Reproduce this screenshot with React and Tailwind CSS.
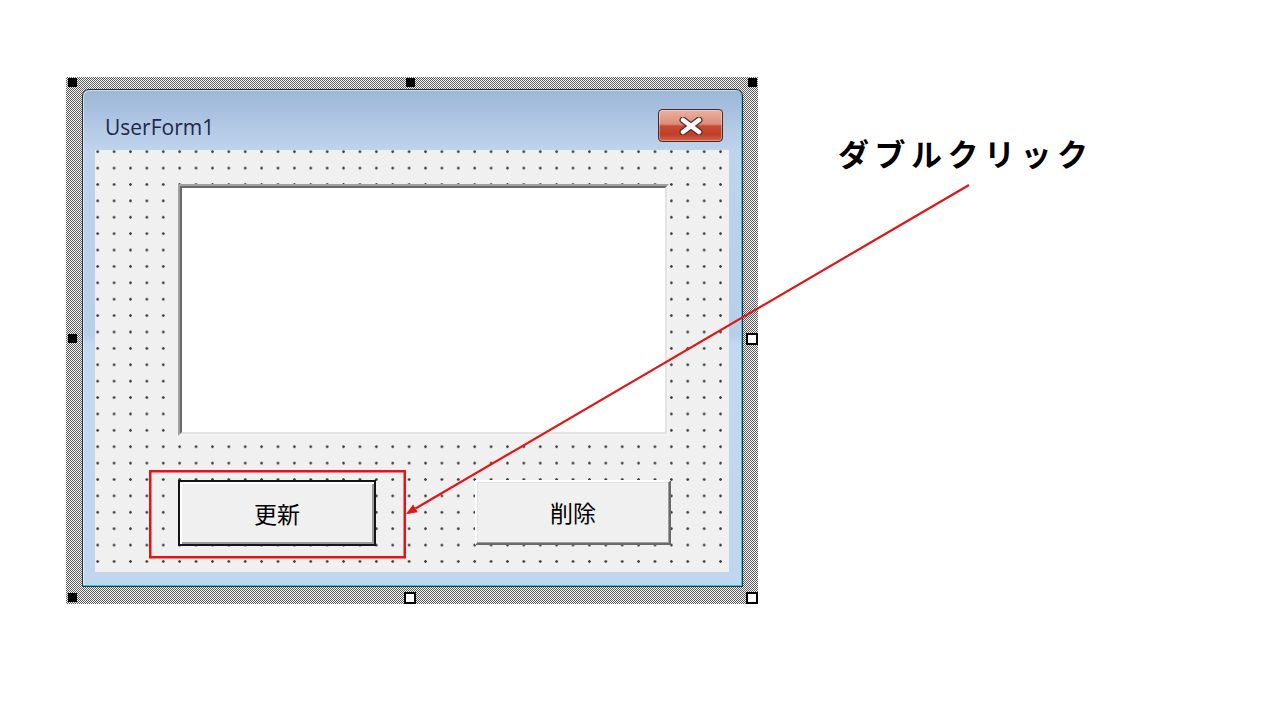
import React from 'react';

// handles around the selected form (black = fixed, white = sizing)
const handles = [
    { cls: 'left-[2px] top-[1px] w-[9px] h-[9px] bg-black' },
    { cls: 'left-[340px] top-[1px] w-[9px] h-[9px] bg-black' },
    { cls: 'left-[682px] top-[1px] w-[9px] h-[9px] bg-black' },
    { cls: 'left-[2px] top-[257px] w-[9px] h-[9px] bg-black' },
    { cls: 'left-[680px] top-[256px] w-[12px] h-[12px] bg-white border-2 border-black' },
    { cls: 'left-[2px] top-[516px] w-[9px] h-[9px] bg-black' },
    { cls: 'left-[338px] top-[515px] w-[12px] h-[12px] bg-white border-2 border-black' },
    { cls: 'left-[680px] top-[515px] w-[12px] h-[12px] bg-white border-2 border-black' },
];

const CloseIcon = () => (
    <svg width="26" height="18" viewBox="0 0 26 18">
        <path d="M5 3 L21 15 M21 3 L5 15" stroke="#5a2a24" strokeWidth="7" strokeLinecap="round" />
        <path d="M5 3 L21 15 M21 3 L5 15" stroke="#ffffff" strokeWidth="4.5" strokeLinecap="round" />
    </svg>
);

const App = () => {
    return (
        <div className="relative w-[1280px] h-[720px] bg-white overflow-hidden flex items-start">
            {/* selection frame */}
            <div className="relative ml-[66px] mt-[77px] w-[692px] h-[527px] pl-[16px] pt-[12px] bg-[repeating-conic-gradient(#5a5a5a_0_25%,#ffffff_0_50%)] bg-[length:2px_2px]">
                {handles.map((h, i) => (
                    <div key={i} className={`absolute ${h.cls}`} />
                ))}

                {/* UserForm window */}
                <div className="w-[661px] h-[498px] flex flex-col rounded-t-[7px] border border-[#26303e] bg-[linear-gradient(to_bottom,#9cb6d7_0px,#b4cbe6_40px,#bed3ec_60px,#b8cfea_245px,#c4d8ef_255px,#c0d6ee_100%)] shadow-[inset_-1px_-1px_0_#3cc6ea,inset_1px_1px_0_rgba(255,255,255,0.5)]">
                    <div className="h-[60px] flex items-start justify-between">
                        <span className="ml-[22px] mt-[23px] text-[21px] leading-[28px] text-[#23264a] font-['Open_Sans','Noto_Sans',sans-serif]">
                            UserForm1
                        </span>
                        <div className="mt-[19px] mr-[19px] w-[65px] h-[33px] rounded-[4px] border border-[#4e2822] flex items-center justify-center bg-[linear-gradient(to_bottom,#e9b1a3_0%,#dd8d7a_45%,#c84a33_52%,#c13f29_80%,#d2654c_100%)] shadow-[inset_0_0_0_1px_rgba(255,255,255,0.35)]">
                            <CloseIcon />
                        </div>
                    </div>

                    <div className="flex pl-[12px]">
                        {/* client area with design grid */}
                        <div className="w-[634px] h-[422px] flex flex-col pl-[83px] pt-[34px] bg-[#f0f0f0] bg-[radial-gradient(circle,#404040_1.1px,transparent_1.5px)] bg-[length:16.4px_16.4px] bg-[position:-5.5px_-6.5px]">
                            {/* TextBox */}
                            <div className="w-[491px] h-[252px] border-2 border-t-[#a0a0a0] border-l-[#a0a0a0] border-r-[#f4f4f4] border-b-[#f4f4f4]">
                                <div className="w-full h-full bg-white border-2 border-t-[#6a6a6a] border-l-[#6a6a6a] border-r-[#e3e3e3] border-b-[#e3e3e3]" />
                            </div>

                            {/* CommandButtons */}
                            <div className="flex mt-[44px]">
                                <div className="w-[198px] h-[66px] border-2 border-[#151515] bg-[#f0f0f0] shadow-[inset_2px_2px_0_#ffffff,inset_-2px_-2px_0_#9a9a9a] flex items-center justify-center">
                                    <span className="text-[23px] text-black font-['Noto_Sans_CJK_JP',sans-serif]">更新</span>
                                </div>
                                <div className="ml-[99px] w-[196px] h-[65px] border-2 border-t-[#ffffff] border-l-[#ffffff] border-r-[#696969] border-b-[#696969] bg-[#f0f0f0] shadow-[inset_-1px_-1px_0_#a0a0a0,inset_1px_1px_0_#e3e3e3] flex items-center justify-center">
                                    <span className="text-[23px] text-black font-['Noto_Sans_CJK_JP',sans-serif]">削除</span>
                                </div>
                            </div>
                        </div>
                    </div>
                </div>
            </div>

            {/* caption */}
            <div className="ml-[80px] mt-[137px] text-[31px] leading-[31px] font-bold tracking-[5.5px] text-black font-['Noto_Sans_CJK_JP',sans-serif]">
                ダブルクリック
            </div>

            {/* annotation: red box and arrow */}
            <svg className="absolute left-0 top-0 pointer-events-none" width="1280" height="720" viewBox="0 0 1280 720">
                <rect x="150.25" y="471.25" width="254.5" height="86" fill="none" stroke="#e31414" strokeWidth="2.5" />
                <line x1="969" y1="185" x2="415.5" y2="508.5" stroke="#e31414" strokeWidth="2.2" />
                <polygon points="406,514 417.8,512.3 413.2,504.6" fill="#e31414" />
            </svg>
        </div>
    );
};

export default App;
